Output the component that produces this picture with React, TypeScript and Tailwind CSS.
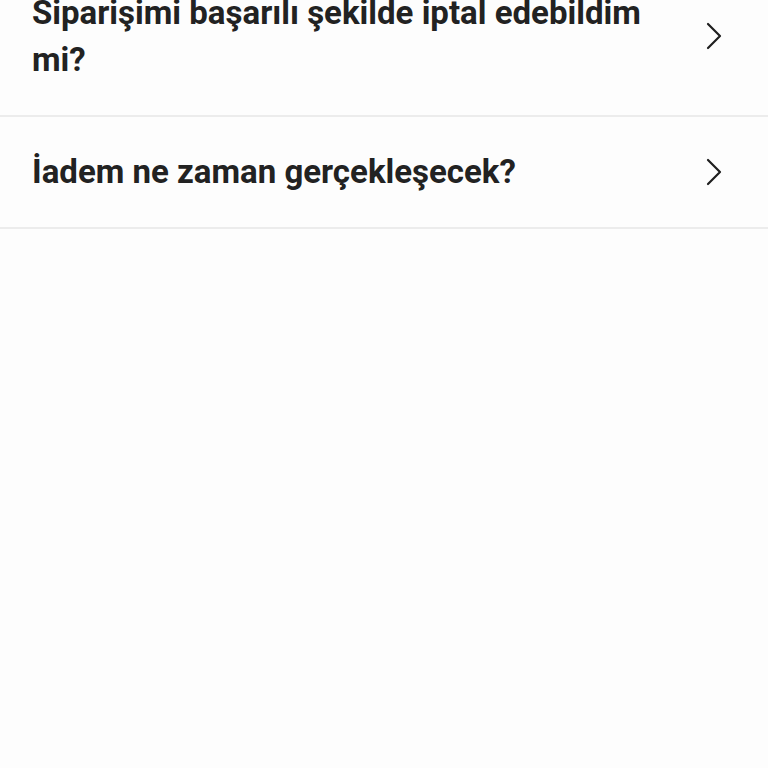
const questions = [
  "Siparişimi başarılı şekilde iptal edebildim mi?",
  "İadem ne zaman gerçekleşecek?",
];

function Chevron() {
  return (
    <svg width="18" height="28" viewBox="0 0 18 28" fill="none" className="shrink-0">
      <path d="M3 2l12 12L3 26" stroke="#1f1f1f" strokeWidth="2.2" strokeLinecap="round" strokeLinejoin="round" />
    </svg>
  );
}

export default function App() {
  return (
    <div className="min-h-screen overflow-hidden bg-[#fdfdfd] font-['Roboto',sans-serif]">
      <ul className="-mt-[42px]">
        {questions.map((q) => (
          <li
            key={q}
            className="flex items-center justify-between gap-6 border-b-2 border-[#ececec] pt-[31px] pb-[32px] pl-[32px] pr-[45px]"
          >
            <span className="max-w-[640px] text-[33px] font-bold leading-[47px] text-[#222222]">{q}</span>
            <Chevron />
          </li>
        ))}
      </ul>
    </div>
  );
}
